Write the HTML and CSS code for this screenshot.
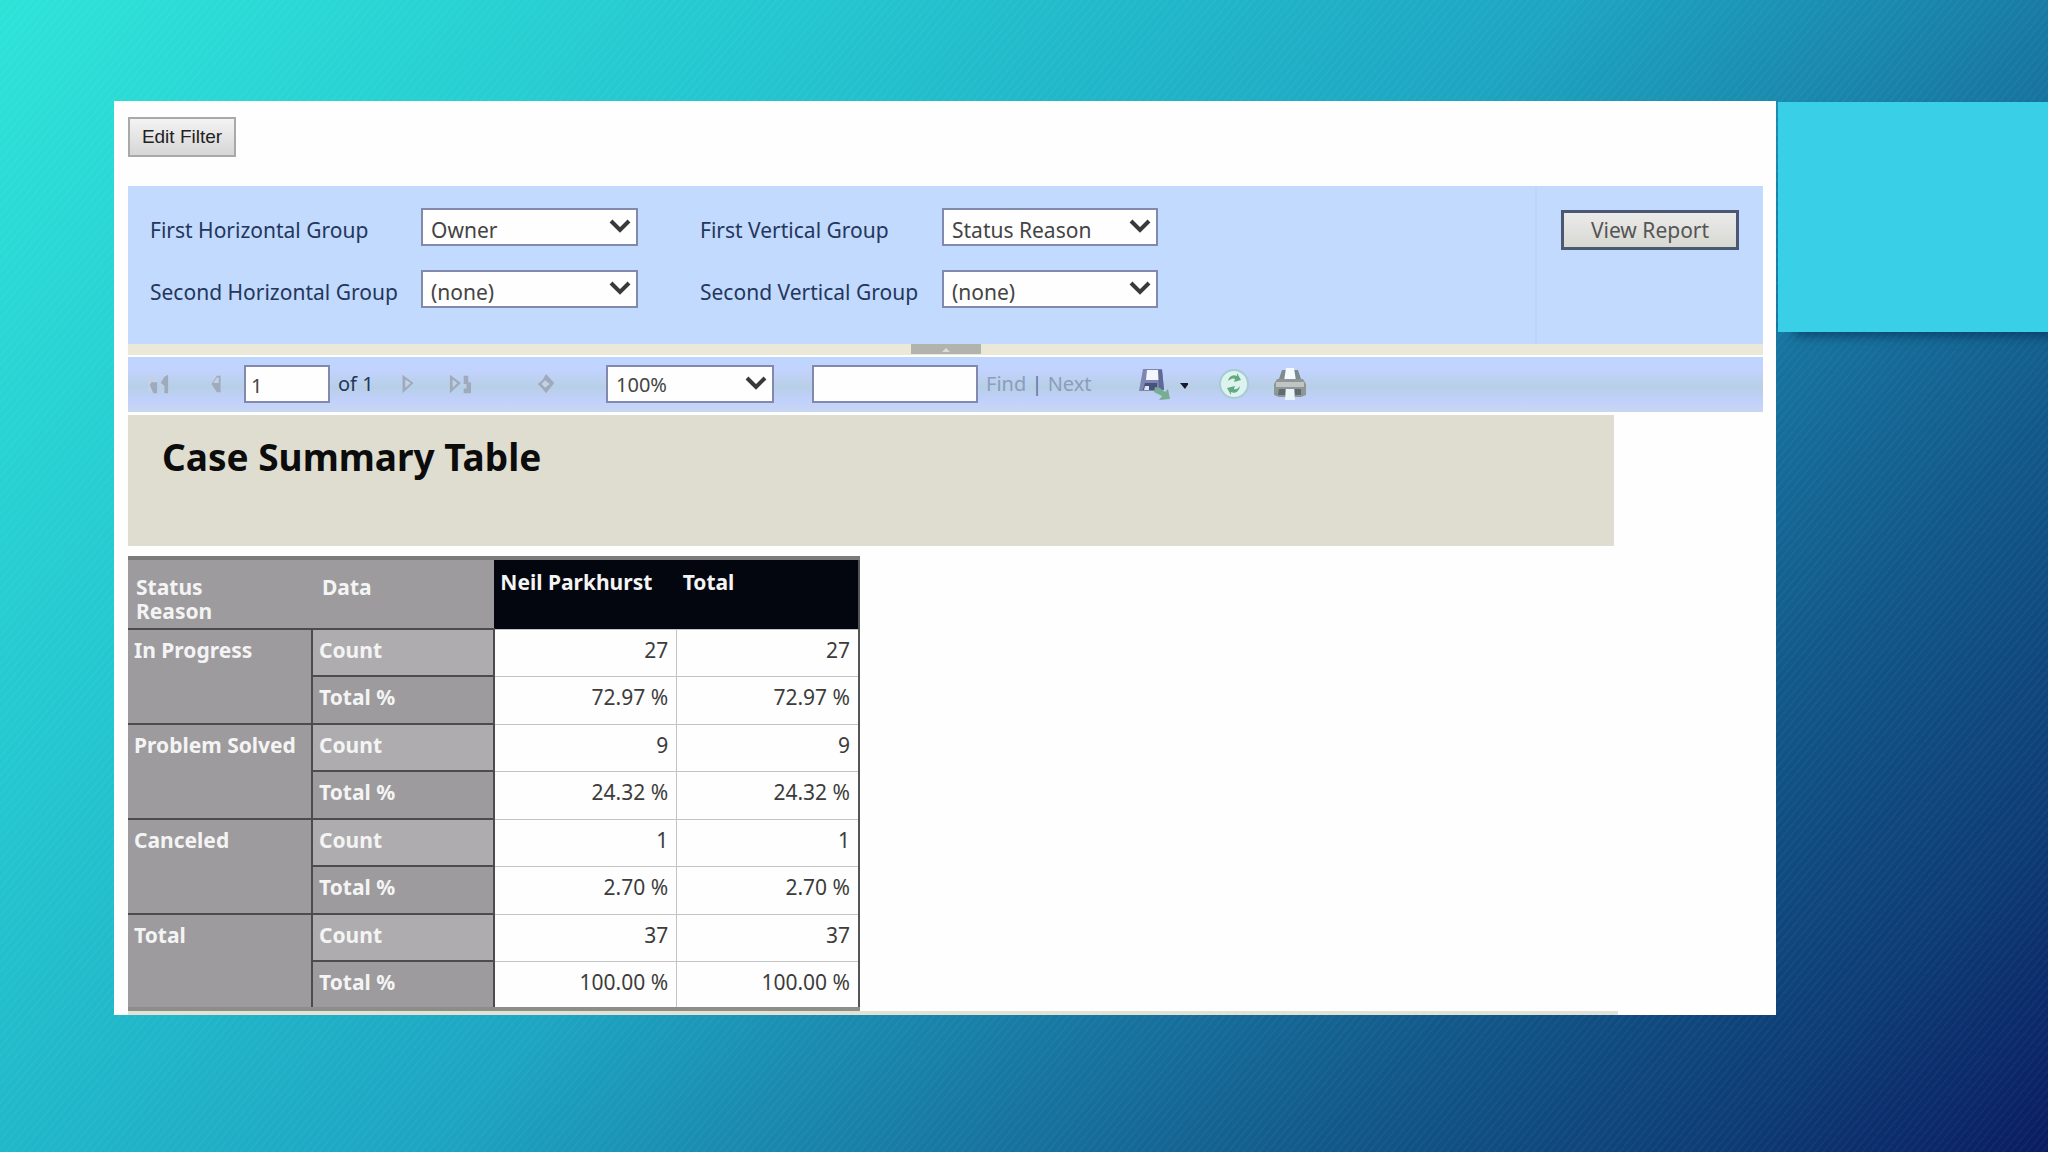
FILE: index.html
```html
<!DOCTYPE html>
<html lang="en">
<head>
    <meta charset="UTF-8">
    <meta name="viewport" content="width=device-width, initial-scale=1.0">
    <title>Case Summary Table</title>
    <link rel="stylesheet" href="styles.css">
</head>
<body>
    <div class="slide">
        <main class="report">
            <button class="edit-filter" type="button">Edit Filter</button>

            <!-- Report parameters -->
            <form class="params">
                <div class="param-fields">
                    <label for="firstHorizontal">First Horizontal Group</label>
                    <div class="select">
                        <select id="firstHorizontal"><option>Owner</option></select>
                        <svg viewBox="0 0 24 16"><path d="M3 3l9 9 9-9"/></svg>
                    </div>
                    <label class="second-col" for="firstVertical">First Vertical Group</label>
                    <div class="select">
                        <select id="firstVertical"><option>Status Reason</option></select>
                        <svg viewBox="0 0 24 16"><path d="M3 3l9 9 9-9"/></svg>
                    </div>
                    <label for="secondHorizontal">Second Horizontal Group</label>
                    <div class="select">
                        <select id="secondHorizontal"><option>(none)</option></select>
                        <svg viewBox="0 0 24 16"><path d="M3 3l9 9 9-9"/></svg>
                    </div>
                    <label class="second-col" for="secondVertical">Second Vertical Group</label>
                    <div class="select">
                        <select id="secondVertical"><option>(none)</option></select>
                        <svg viewBox="0 0 24 16"><path d="M3 3l9 9 9-9"/></svg>
                    </div>
                </div>
                <div class="param-submit">
                    <button class="view-report" type="button">View Report</button>
                </div>
            </form>

            <div class="splitter">
                <button class="splitter-handle" type="button" aria-label="Hide parameters">
                    <svg viewBox="0 0 10 6"><path d="M5 1l4 4H1z"/></svg>
                </button>
            </div>

            <!-- Viewer toolbar -->
            <div class="toolbar">
                <button class="tool first-page" type="button" aria-label="First page">
                    <svg viewBox="0 0 24 24"><path class="light" d="M1 3h4v18H1zM11 3v18l-7-9zM23 3v18l-9-9z"/><path class="dark" d="M5 10h6v12H7l-4-9zM15 11l4-7 4-2v20h-4v-8z"/></svg>
                </button>
                <button class="tool prev-page" type="button" aria-label="Previous page">
                    <svg viewBox="0 0 24 24"><path class="dark" d="M17 3v18h-4l-6-9 6-9z"/><path class="light" d="M9 11l4-6h2v6z"/></svg>
                </button>
                <input class="page-number" type="text" value="1" aria-label="Current page">
                <span class="page-count">of 1</span>
                <button class="tool next-page" type="button" aria-label="Next page">
                    <svg viewBox="0 0 24 24"><path class="dark" d="M6 2l12 9-12 11z"/><path class="light" d="M9 7l6 4-6 5z"/></svg>
                </button>
                <button class="tool last-page" type="button" aria-label="Last page">
                    <svg viewBox="0 0 24 24"><path class="dark" d="M1 2l12 9L1 22zM16 3h5v7h3v12h-8v-5h3v-5h-3z"/><path class="light" d="M4 7l5 4-5 5z"/></svg>
                </button>
                <button class="tool back" type="button" aria-label="Back to parent report">
                    <svg viewBox="0 0 24 24"><path class="dark" d="M12 1l9 10-9 11-4-5-5-5 5-4z"/><path class="light" d="M11 8l5 4-5 4-4-4z"/></svg>
                </button>
                <div class="select zoom">
                    <select aria-label="Zoom"><option>100%</option></select>
                    <svg viewBox="0 0 24 16"><path d="M3 3l9 9 9-9"/></svg>
                </div>
                <input class="find-text" type="text" aria-label="Find text in report">
                <div class="find-links"><a href="#">Find</a> <span>|</span> <a href="#">Next</a></div>
                <button class="tool export" type="button" aria-label="Export">
                    <svg viewBox="0 0 50 34">
                        <path d="M5 2h19l2 20-4 2H1z" fill="#7d86b2"/>
                        <path d="M9 3h12v10H8z" fill="#f4f6ff"/>
                        <path d="M20 3h4l2 20h-5z" fill="#5f6896"/>
                        <path d="M7 16h12v7H5z" fill="#46527a"/>
                        <path d="M7 19h4v4H6z" fill="#dce2f4"/>
                        <path d="M17 20l5 1 5 4 3-3 2 10-11 1 3-4-8-4z" fill="#78ac93"/>
                        <path d="M42 16h9l-4 6z" fill="#141b2c"/>
                    </svg>
                </button>
                <button class="tool refresh" type="button" aria-label="Refresh">
                    <svg viewBox="0 0 32 32">
                        <circle cx="16" cy="16" r="14" fill="#ddf3ef" stroke="#a6ccd2" stroke-width="2"/>
                        <path d="M10 13c1-5 5-7 9-5v-3l4 7-7 2 1-3c-3-1-4 0-7 2zM22 18c-1 6-5 8-9 6v3l-4-7 8-2-1 3c3 1 4-1 6-3z" fill="#62aa80"/>
                    </svg>
                </button>
                <button class="tool print" type="button" aria-label="Print">
                    <svg viewBox="0 0 32 34">
                        <path d="M8 3h16l4 12H4z" fill="#7d8a8e"/>
                        <path d="M12 1h8l2 13H10z" fill="#f5faff"/>
                        <path d="M3 12h26l3 5v11l-5 2H5l-5-2V17z" fill="#8f9796"/>
                        <path d="M2 15h28v5H2z" fill="#c0c5c4"/>
                        <path d="M5 22h6v6H4zM21 22h6v6h-6z" fill="#606b70"/>
                        <path d="M12 22h8l1 11H11z" fill="#e8f3fa"/>
                    </svg>
                </button>
            </div>

            <header class="report-header">
                <h1>Case Summary Table</h1>
            </header>

            <table>
                <colgroup><col class="group-col"><col><col><col></colgroup>
                <thead>
                    <tr>
                        <th class="corner">Status<br>Reason</th>
                        <th class="corner">Data</th>
                        <th class="owner">Neil Parkhurst</th>
                        <th class="owner">Total</th>
                    </tr>
                </thead>
                <tbody>
                    <tr><th rowspan="2">In Progress</th><th class="count">Count</th><td>27</td><td>27</td></tr>
                    <tr class="percent"><th>Total %</th><td>72.97 %</td><td>72.97 %</td></tr>
                    <tr><th rowspan="2">Problem Solved</th><th class="count">Count</th><td>9</td><td>9</td></tr>
                    <tr class="percent"><th>Total %</th><td>24.32 %</td><td>24.32 %</td></tr>
                    <tr><th rowspan="2">Canceled</th><th class="count">Count</th><td>1</td><td>1</td></tr>
                    <tr class="percent"><th>Total %</th><td>2.70 %</td><td>2.70 %</td></tr>
                    <tr><th rowspan="2">Total</th><th class="count">Count</th><td>37</td><td>37</td></tr>
                    <tr class="percent"><th>Total %</th><td>100.00 %</td><td>100.00 %</td></tr>
                </tbody>
            </table>
            <div class="report-footer"></div>
        </main>

        <div class="accent"></div>
    </div>
</body>
</html>
```
FILE: styles.css
```css
* {
    box-sizing: border-box;
}

body {
    margin: 0;
    min-height: 100vh;
    font-family: "Noto Sans", Tahoma, sans-serif;
    font-size: 21px;
    line-height: 24px;
    color: #24365c;
    background:
        repeating-linear-gradient(130deg, rgba(255, 255, 255, 0.03) 0 2px, transparent 2px 6px),
        linear-gradient(135deg, #2de3d8 0%, #23c3ce 28%, #1da5c2 49%, #1776a0 66%, #12598a 77%, #0d3b74 90%, #0a1c60 100%) no-repeat;
}

button, input, select {
    font: inherit;
    color: inherit;
}

.slide {
    display: grid;
    grid-template-columns: minmax(0, 1fr) 270px;
    column-gap: 2px;
    align-items: start;
    padding: 101px 0 101px 114px;
}

.report {
    background: #fefefe;
    padding: 16px 13px 0 14px;
}

.edit-filter {
    display: block;
    width: 108px;
    height: 40px;
    margin-bottom: 29px;
    padding: 0;
    font-family: "Liberation Sans", Arial, sans-serif;
    font-size: 19px;
    color: #222;
    background: linear-gradient(#f3f3f3, #d6d6d6);
    border: 2px solid #a9a9a9;
}

/* Parameters */
.params {
    display: flex;
    height: 158px;
    background: #c2dafd;
}

.param-fields {
    flex: 1;
    display: grid;
    grid-template-columns: 271px 217px 304px 216px;
    grid-auto-rows: 38px;
    row-gap: 24px;
    align-items: center;
    padding: 22px 0 0 22px;
}

.param-fields label {
    padding-top: 6px;
}

.param-fields .second-col {
    padding-left: 62px;
}

.select {
    position: relative;
    height: 38px;
}

.select select {
    width: 100%;
    height: 100%;
    padding: 6px 8px 0;
    appearance: none;
    color: #444;
    background: #fefefe;
    border: 2px solid #8289ad;
    border-radius: 0;
}

.select svg {
    position: absolute;
    top: 10px;
    right: 6px;
    width: 24px;
    height: 16px;
    fill: none;
    stroke: #3a3a3a;
    stroke-width: 4;
    pointer-events: none;
}

.param-submit {
    width: 228px;
    padding: 24px 24px 0;
    border-left: 2px solid #bdd6f8;
}

.view-report {
    width: 100%;
    height: 40px;
    padding: 0;
    color: #555;
    background: linear-gradient(#eaeaea, #d8d8d2);
    border: 3px solid #4c5872;
}

.splitter {
    display: flex;
    justify-content: center;
    height: 11px;
    background: #ebe8d8;
}

.splitter-handle {
    width: 70px;
    height: 10px;
    padding: 0;
    line-height: 0;
    background: #b3b3ad;
    border: 0;
}

.splitter-handle svg {
    width: 10px;
    height: 6px;
    fill: #dcdcd4;
}

/* Toolbar */
.toolbar {
    display: flex;
    align-items: center;
    height: 55px;
    margin-top: 2px;
    padding: 0 0 1px 18px;
    font-size: 20px;
    background: linear-gradient(#bdd6fe 0%, #c2d3fd 25%, #b7cfe6 55%, #c1d0fc 78%, #c8d7f0 100%);
}

.toolbar input {
    height: 38px;
    padding: 2px 5px 0;
    color: #444;
    background: #fefefe;
    border: 2px solid #8289ad;
}

.tool {
    flex: none;
    padding: 0;
    line-height: 0;
    background: none;
    border: 0;
}

.tool svg {
    width: 24px;
    height: 22px;
}

.tool .dark {
    fill: #9fabbc;
}

.tool .light {
    fill: #c3d1e6;
}

.prev-page {
    margin-left: 34px;
}

.toolbar .page-number {
    width: 86px;
    margin-left: 16px;
}

.page-count {
    width: 66px;
    padding-left: 8px;
}

.last-page {
    margin-left: 28px;
}

.back {
    margin-left: 62px;
}

.zoom {
    width: 168px;
    margin-left: 48px;
}

.zoom select {
    padding-top: 2px;
}

.toolbar .find-text {
    width: 166px;
    margin-left: 38px;
}

.find-links {
    width: 160px;
    padding-left: 8px;
    color: #66759a;
}

.find-links a {
    color: #8d9cbd;
    text-decoration: none;
}

.export svg {
    width: 50px;
    height: 34px;
}

.refresh {
    margin-left: 30px;
}

.refresh svg {
    width: 32px;
    height: 32px;
}

.print {
    margin-left: 24px;
}

.print svg {
    width: 32px;
    height: 34px;
}

/* Report body */
.report-header {
    height: 131px;
    margin: 3px 149px 10px 0;
    padding: 22px 34px;
    background: #deddd0;
}

h1 {
    margin: 0;
    font-size: 37px;
    line-height: 40px;
    color: #0c0c0c;
}

table {
    width: 732px;
    table-layout: fixed;
    border-collapse: collapse;
    border-top: 4px solid #7b7b7b;
    border-right: 2px solid #555;
    border-bottom: 4px solid #8e8e88;
}

.group-col {
    width: 184px;
}

th, td {
    height: 47px;
    padding: 8px 4px 0;
    vertical-align: top;
}

.percent td, .percent th {
    height: 48px;
}

th {
    padding-left: 6px;
    text-align: left;
    white-space: nowrap;
    color: #f4f4f4;
    background: #9d9b9d;
    border-top: 2px solid #4c4c4c;
}

tbody th {
    border-right: 2px solid #4c4c4c;
}

td {
    padding-right: 8px;
    text-align: right;
    color: #3c3c3c;
    border: 1px solid #c4c4c6;
}

thead th {
    height: 71px;
    border-top: 0;
}

.corner {
    padding: 15px 8px 0;
}

.corner + .corner {
    padding-left: 10px;
}

.owner {
    padding-top: 10px;
    background: #03060f;
}

.count {
    background: #aeacaf;
}

.report-footer {
    height: 4px;
    margin-right: 145px;
    background: #e0e2d6;
}

.accent {
    height: 230px;
    margin-top: 1px;
    background: #39cfe7;
    box-shadow: 12px 8px 10px -4px rgba(4, 40, 80, 0.6);
}
```
